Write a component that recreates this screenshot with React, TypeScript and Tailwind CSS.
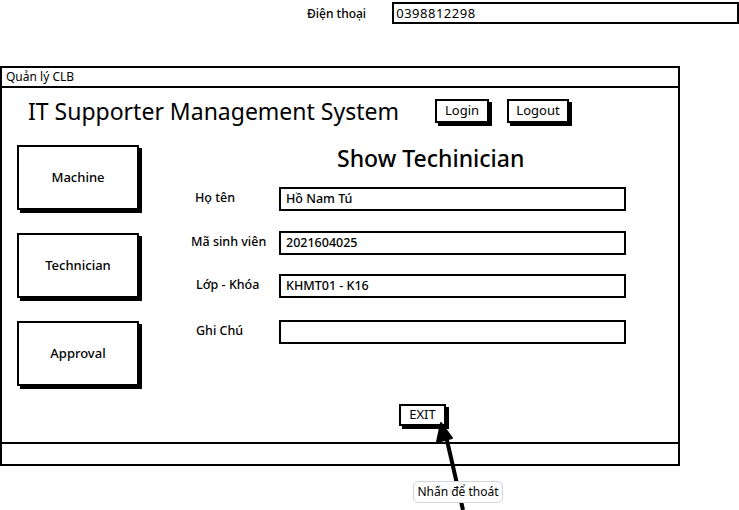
// Wireframe: "Show Techinician" screen of the IT Supporter Management System

const FONT = "font-['Noto_Sans','Liberation_Sans',sans-serif]"

const NAV_ITEMS = ['Machine', 'Technician', 'Approval']

const FIELDS = [
  { label: 'Họ tên', value: 'Hồ Nam Tú', pl: 'pl-[4px]', mt: 'mt-[16px]' },
  { label: 'Mã sinh viên', value: '2021604025', pl: 'pl-0', mt: 'mt-[20px]' },
  { label: 'Lớp - Khóa', value: 'KHMT01 - K16', pl: 'pl-[5px]', mt: 'mt-[19px]' },
  { label: 'Ghi Chú', value: '', pl: 'pl-[5px]', mt: 'mt-[22px]' },
]

function SketchButton({ label, className }: { label: string; className: string }) {
  return (
    <div
      className={`flex items-center justify-center border-2 border-black bg-white shadow-[3px_3px_0_#000] text-[13px] text-black ${className}`}
    >
      {label}
    </div>
  )
}

export default function App() {
  return (
    <div className={`relative w-[739px] h-[510px] overflow-hidden bg-white text-black ${FONT}`}>
      {/* Phone field above the window */}
      <div className="flex pt-[2px] pl-[307px]">
        <div className="w-[86px] pt-[3px] text-[12px] font-medium">Điện thoại</div>
        <div className="w-[350px] h-[22px] border-2 border-black px-[2px] text-[13px] leading-[18px] tracking-[0.5px]">
          0398812298
        </div>
      </div>

      {/* Window */}
      <div className="mt-[42px] w-[680px] h-[400px] border-2 border-black flex flex-col">
        <div className="h-[20px] border-b-2 border-black px-[4px] text-[12px] leading-[18px]">Quản lý CLB</div>

        <div className="flex-1 flex flex-col pt-[7px]">
          {/* Header */}
          <div className="flex items-center h-[32px]">
            <div className="w-[433px] pl-[26px] text-[23px] leading-[30px]">
              IT Supporter Management System
            </div>
            <SketchButton label="Login" className="w-[54px] h-[24px]" />
            <SketchButton label="Logout" className="ml-[18px] w-[62px] h-[24px]" />
          </div>

          {/* Content */}
          <div className="flex mt-[18px] pl-[15px]">
            <div className="flex flex-col gap-[23px] w-[122px]">
              {NAV_ITEMS.map((item) => (
                <SketchButton key={item} label={item} className="w-[122px] h-[65px] font-medium" />
              ))}
            </div>

            <div className="flex-1 flex flex-col">
              <div className="ml-[198px] text-[23px] leading-[26px] font-medium">Show Techinician</div>

              {FIELDS.map((f) => (
                <div key={f.label} className={`flex ml-[52px] ${f.mt}`}>
                  <div className={`w-[88px] pt-[2px] text-[12.5px] leading-[18px] font-medium ${f.pl}`}>{f.label}</div>
                  <div className="w-[347px] h-[24px] border-2 border-black px-[5px] text-[12.5px] leading-[20px] font-medium">
                    {f.value}
                  </div>
                </div>
              ))}

              <SketchButton label="EXIT" className="ml-[260px] mt-[60px] w-[47px] h-[22px]" />
            </div>
          </div>
        </div>

        <div className="h-[22px] border-t-2 border-black" />
      </div>

      {/* Annotation arrow */}
      <svg className="absolute left-0 top-0" width="739" height="510" viewBox="0 0 739 510">
        <line x1="463" y1="510" x2="446" y2="436" stroke="#000" strokeWidth="4" />
        <polygon points="441,423 437,442 452,438" fill="#000" stroke="#000" strokeWidth="2" strokeLinejoin="round" />
      </svg>

      {/* Tooltip */}
      <div className="absolute left-[413px] top-[481px] w-[90px] h-[22px] flex items-center justify-center rounded-[5px] border border-gray-300 bg-white text-[12px]">
        Nhấn để thoát
      </div>
    </div>
  )
}
